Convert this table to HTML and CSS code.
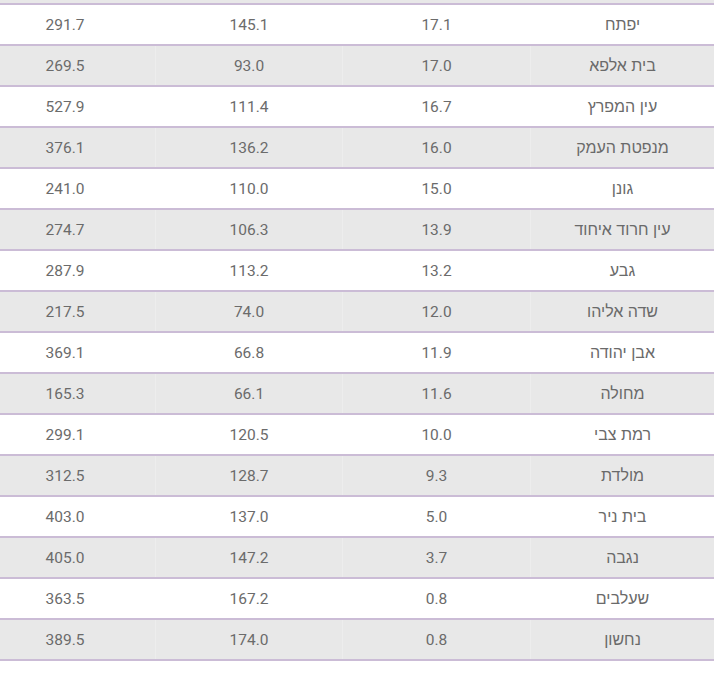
FILE: index.html
```html
<!DOCTYPE html>
<html lang="he" dir="rtl">
<head>
<meta charset="utf-8">
<link rel="stylesheet" href="styles.css">
</head>
<body>
<div class="wrap">
  <div class="prev"></div>
  <div class="table">
    <div class="row"><div class="c name">יפתח</div><div class="c">17.1</div><div class="c">145.1</div><div class="c">291.7</div></div>
    <div class="row alt"><div class="c name">בית אלפא</div><div class="c">17.0</div><div class="c">93.0</div><div class="c">269.5</div></div>
    <div class="row"><div class="c name">עין המפרץ</div><div class="c">16.7</div><div class="c">111.4</div><div class="c">527.9</div></div>
    <div class="row alt"><div class="c name">מנפטת העמק</div><div class="c">16.0</div><div class="c">136.2</div><div class="c">376.1</div></div>
    <div class="row"><div class="c name">גונן</div><div class="c">15.0</div><div class="c">110.0</div><div class="c">241.0</div></div>
    <div class="row alt"><div class="c name">עין חרוד איחוד</div><div class="c">13.9</div><div class="c">106.3</div><div class="c">274.7</div></div>
    <div class="row"><div class="c name">גבע</div><div class="c">13.2</div><div class="c">113.2</div><div class="c">287.9</div></div>
    <div class="row alt"><div class="c name">שדה אליהו</div><div class="c">12.0</div><div class="c">74.0</div><div class="c">217.5</div></div>
    <div class="row"><div class="c name">אבן יהודה</div><div class="c">11.9</div><div class="c">66.8</div><div class="c">369.1</div></div>
    <div class="row alt"><div class="c name">מחולה</div><div class="c">11.6</div><div class="c">66.1</div><div class="c">165.3</div></div>
    <div class="row"><div class="c name">רמת צבי</div><div class="c">10.0</div><div class="c">120.5</div><div class="c">299.1</div></div>
    <div class="row alt"><div class="c name">מולדת</div><div class="c">9.3</div><div class="c">128.7</div><div class="c">312.5</div></div>
    <div class="row"><div class="c name">בית ניר</div><div class="c">5.0</div><div class="c">137.0</div><div class="c">403.0</div></div>
    <div class="row alt"><div class="c name">נגבה</div><div class="c">3.7</div><div class="c">147.2</div><div class="c">405.0</div></div>
    <div class="row"><div class="c name">שעלבים</div><div class="c">0.8</div><div class="c">167.2</div><div class="c">363.5</div></div>
    <div class="row alt"><div class="c name">נחשון</div><div class="c">0.8</div><div class="c">174.0</div><div class="c">389.5</div></div>
  </div>
</div>
</body>
</html>
```

FILE: styles.css
```css
html, body {
  margin: 0;
  padding: 0;
  background: #ffffff;
}
body {
  width: 714px;
  height: 673px;
  overflow: hidden;
  font-family: Roboto, "Liberation Sans", sans-serif;
  color: #6b6b6b;
}
.wrap {
  direction: rtl;
  width: 714px;
  overflow: hidden;
}
.prev {
  height: 3px;
  background: #e8e8e8;
  border-bottom: 2px solid #cbbcd6;
}
.table {
  width: 740px;
}
.row {
  display: grid;
  grid-template-columns: 184px 188px 187px 181px;
  height: 39px;
  border-bottom: 2px solid #cbbcd6;
  background: #ffffff;
}
.row.alt {
  background: #e8e8e8;
}
.c {
  display: flex;
  align-items: center;
  justify-content: center;
  font-size: 15.5px;
  border-left: 1px solid transparent;
}
.row.alt .c {
  border-left-color: #ededed;
}
.c.name {
  font-family: "Liberation Sans", "DejaVu Sans", sans-serif;
  font-size: 16px;
  color: #6a6a6a;
}
```
